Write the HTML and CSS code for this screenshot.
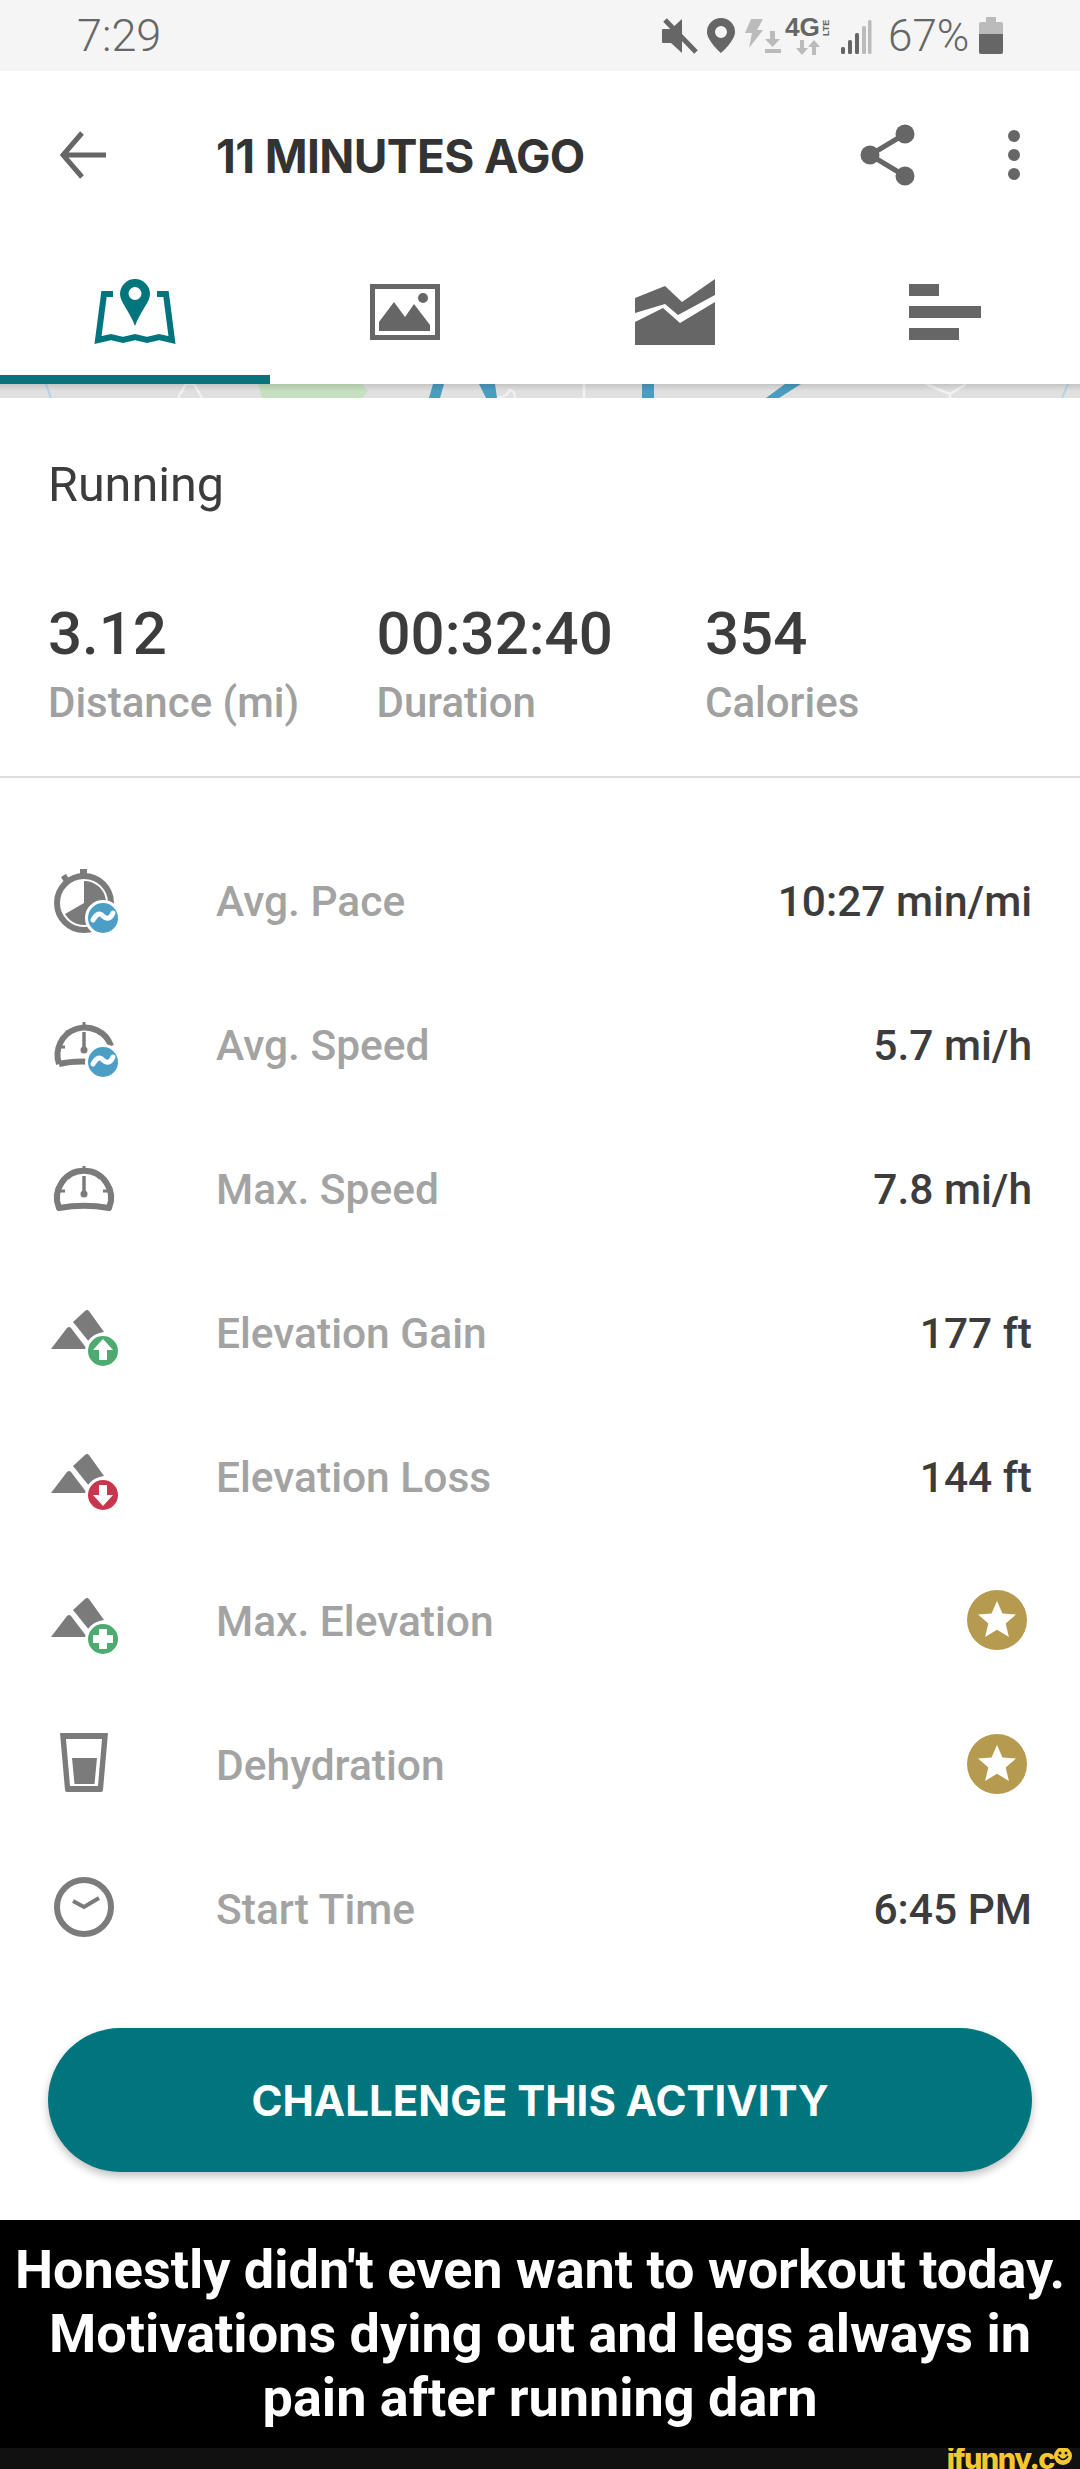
FILE: index.html
```html
<!DOCTYPE html>
<html lang="en">
<head>
<meta charset="utf-8">
<title>Activity</title>
<link rel="stylesheet" href="styles.css">
</head>
<body>
<div class="page">
  <header class="status">
    <span class="clock">7:29</span>
    <div class="status-right">
      <svg class="status-icons" width="210" height="71" viewBox="662 0 210 71">
        <path class="d" d="M663 29h8l11-10v34l-11-10h-8a1 1 0 0 1-1-1V30a1 1 0 0 1 1-1z"/>
        <path class="cut" d="M665 20l31 32" />
        <path class="d" fill-rule="evenodd" d="M721 18a14 14 0 0 1 14 14c0 9-14 21-14 21s-14-12-14-21a14 14 0 0 1 14-14zm0 8a6 6 0 1 0 0 12 6 6 0 0 0 0-12z"/>
        <path class="l" d="M751 19h12l-6 11h6l-14 18 3-15h-7z"/>
        <path class="l" d="M770 31h5v8h5l-7.500 8-7.500-8h5zM765 49h16v4h-16z"/>
        <text class="net" x="785" y="36" textLength="35" lengthAdjust="spacingAndGlyphs">4G</text>
        <text class="lte" transform="translate(829 36) rotate(-90)">LTE</text>
        <path class="l" d="M800 40h4v8h4l-6 7-6-7h4zM814 40l6 7h-4v8h-4v-8h-4z"/>
        <rect class="d" x="841" y="47" width="4" height="7" rx="1.500"/>
        <rect class="d" x="848" y="40" width="4" height="14" rx="1.500"/>
        <rect class="d" x="855" y="33" width="4" height="21" rx="1.500"/>
        <rect class="l" x="862" y="26" width="4" height="28" rx="1.500"/>
        <rect class="l" x="868" y="20" width="3.500" height="34" rx="1.500"/>
      </svg>
      <span class="pct">67%</span>
      <svg class="battery" width="24" height="37" viewBox="0 0 24 37">
        <path class="l" d="M7 0h10v5h5a2 2 0 0 1 2 2v10H0V7a2 2 0 0 1 2-2h5z"/>
        <path class="d" d="M0 17h24v18a2 2 0 0 1-2 2H2a2 2 0 0 1-2-2z"/>
      </svg>
    </div>
  </header>

  <div class="appbar">
    <svg class="back" width="48" height="48" viewBox="0 0 48 48"><path d="M46 24H3M22 2 3 24l19 22"/></svg>
    <h1 class="title">11 MINUTES AGO</h1>
    <svg class="share" width="60" height="64" viewBox="0 0 60 64">
      <path class="share-line" d="M45 11 10 32l35 21"/>
      <circle cx="45" cy="11" r="9.500"/><circle cx="10" cy="32" r="9.500"/><circle cx="45" cy="53" r="9.500"/>
    </svg>
    <svg class="more" width="12" height="50" viewBox="0 0 12 50">
      <circle cx="6" cy="6" r="6"/><circle cx="6" cy="25" r="6"/><circle cx="6" cy="44" r="6"/>
    </svg>
  </div>

  <nav class="tabs">
    <div class="tab tab-active">
      <svg width="90" height="72" viewBox="90 276 90 72">
        <path class="book" d="M113 294h-9l-6 46 13-3 12 3 12-3 12 3 12-3 13 3-6-46h-9"/>
        <path class="pin" fill-rule="evenodd" d="M135 279a15 15 0 0 1 15 15c0 8-9 16-15 32-6-16-15-24-15-32a15 15 0 0 1 15-15zm0 8a6.500 6.500 0 1 0 0 13 6.500 6.500 0 0 0 0-13z"/>
      </svg>
    </div>
    <div class="tab">
      <svg width="90" height="72" viewBox="360 276 90 72">
        <path class="g" fill-rule="evenodd" d="M370 284h70v56h-70zm5 5v46h60v-46z"/>
        <path class="g" d="M379 331v-9l15-20 11 15 9-13 16 21v6z"/>
        <circle class="g" cx="423" cy="298" r="5"/>
      </svg>
    </div>
    <div class="tab">
      <svg width="90" height="72" viewBox="630 276 90 72">
        <path class="g" d="M635 298l30-12 17 16 33-23v16l-37 20-13-11-30 9z"/>
        <path class="g" d="M635 322l28-14 17 15 35-21v43h-80z"/>
      </svg>
    </div>
    <div class="tab">
      <svg width="90" height="72" viewBox="900 276 90 72">
        <path class="g" d="M909 284h30v12h-30zM909 306h72v12h-72zM909 328h50v12h-50z"/>
      </svg>
    </div>
  </nav>

  <svg class="map" width="1080" height="14" viewBox="0 0 1080 14" preserveAspectRatio="none">
    <defs>
      <linearGradient id="mapshade" x1="0" y1="0" x2="0" y2="1">
        <stop offset="0" stop-color="#000" stop-opacity="0.12"/>
        <stop offset="0.5" stop-color="#000" stop-opacity="0"/>
      </linearGradient>
    </defs>
    <rect width="1080" height="14" fill="#e0e0e0"/>
    <path d="M258 0h104l6 7-6 7H262z" fill="#c5e0c0"/>
    <path d="M46 0l5 14M1068 0l-6 14" stroke="#b5d3e6" stroke-width="2" fill="none"/>
    <path d="M178 14l8-14h8l8 14M584 0v14M926 0l24 10v4M966 0l-16 10" stroke="#f2f2f2" stroke-width="2.500" fill="none"/>
    <path d="M433 0h11l-4 14h-11zM479 0h16l2 14h-11zM642 0h12v14h-12zM785 0h16l-22 14h-13z" fill="#4b9cbf"/>
    <path d="M497 14q12-2 12-8 6 0 6 8" stroke="#f2f2f2" stroke-width="2" fill="none"/>
    <rect width="1080" height="14" fill="url(#mapshade)"/>
  </svg>

  <section class="summary">
    <h2 class="sport">Running</h2>
    <div class="stats">
      <div class="stat"><div class="stat-num">3.12</div><div class="stat-label">Distance (mi)</div></div>
      <div class="stat"><div class="stat-num">00:32:40</div><div class="stat-label">Duration</div></div>
      <div class="stat"><div class="stat-num">354</div><div class="stat-label">Calories</div></div>
    </div>
  </section>

  <section class="rows">
    <div class="row">
      <svg class="row-icon" viewBox="0 0 80 80">
        <rect class="m" x="32" y="9" width="7" height="7"/>
        <path class="m" d="M13 17l5-3 3 5-5 3z"/>
        <circle class="ring" cx="36" cy="43" r="27"/>
        <path class="m" d="M36 21A22 22 0 1 1 17 54L36 43z"/>
        <circle class="bd-blue" cx="55" cy="58" r="16.500"/>
        <path class="wave" d="M45 60c4-7 7-7 10-4s7 4 10-3"/>
      </svg>
      <span class="row-label">Avg. Pace</span><span class="row-value">10:27 min/mi</span>
    </div>
    <div class="row">
      <svg class="row-icon" viewBox="0 0 80 80">
        <path class="gauge" d="M11 60A27 27 0 1 1 63 42M11 60c12-3 24-3 36-2"/>
        <path class="tick" d="M36 18v5M18 27l4 3M54 27l-4 3M12 43h5"/>
        <path class="needle" d="M36 28v16"/><circle class="m" cx="36" cy="46" r="3.500"/>
        <circle class="bd-blue" cx="55" cy="58" r="16.500"/>
        <path class="wave" d="M45 60c4-7 7-7 10-4s7 4 10-3"/>
      </svg>
      <span class="row-label">Avg. Speed</span><span class="row-value">5.7 mi/h</span>
    </div>
    <div class="row">
      <svg class="row-icon" viewBox="0 0 80 80">
        <path class="gauge" d="M11 60A27 27 0 1 1 61 60c-16-3-34-3-50 0z"/>
        <path class="tick" d="M36 18v5M18 27l4 3M54 27l-4 3M12 43h5M60 43h-5"/>
        <path class="needle" d="M36 28v16"/><circle class="m" cx="36" cy="46" r="3.500"/>
      </svg>
      <span class="row-label">Max. Speed</span><span class="row-value">7.8 mi/h</span>
    </div>
    <div class="row">
      <svg class="row-icon" viewBox="0 0 80 80">
        <path class="m" d="M3 57l16-21q2-2 4 0l16 21zM25 30l12-11q2-2 4 0l15 21q-9 1-14 11z"/>
        <circle class="bd-green" cx="55" cy="59" r="16.500"/>
        <path class="white" d="M55 47l10 11h-6v10h-8V58h-6z"/>
      </svg>
      <span class="row-label">Elevation Gain</span><span class="row-value">177 ft</span>
    </div>
    <div class="row">
      <svg class="row-icon" viewBox="0 0 80 80">
        <path class="m" d="M3 57l16-21q2-2 4 0l16 21zM25 30l12-11q2-2 4 0l15 21q-9 1-14 11z"/>
        <circle class="bd-red" cx="55" cy="59" r="16.500"/>
        <path class="white" d="M51 49h8v10h6L55 70 45 59h6z"/>
      </svg>
      <span class="row-label">Elevation Loss</span><span class="row-value">144 ft</span>
    </div>
    <div class="row">
      <svg class="row-icon" viewBox="0 0 80 80">
        <path class="m" d="M3 57l16-21q2-2 4 0l16 21zM25 30l12-11q2-2 4 0l15 21q-9 1-14 11z"/>
        <circle class="bd-green" cx="55" cy="59" r="16.500"/>
        <path class="white" d="M51 49h8v6h6v8h-6v6h-8v-6h-6v-8h6z"/>
      </svg>
      <span class="row-label">Max. Elevation</span>
      <svg class="star" width="60" height="60" viewBox="0 0 60 60"><circle class="star-bg" cx="30" cy="30" r="30"/><path class="white" d="M30 11l5.500 12.500 13.500 1-10.300 9 3.200 13.500L30 39.800 18.100 47l3.200-13.500-10.300-9 13.500-1z"/></svg>
    </div>
    <div class="row">
      <svg class="row-icon" viewBox="0 0 80 80">
        <path class="m" fill-rule="evenodd" d="M12 9h48l-5 57a2 2 0 0 1-2 2H19a2 2 0 0 1-2-2zm6 6 4 47h28l4-47z"/>
        <path class="m" d="M24 34h25l-2.500 26h-20z"/>
      </svg>
      <span class="row-label">Dehydration</span>
      <svg class="star" width="60" height="60" viewBox="0 0 60 60"><circle class="star-bg" cx="30" cy="30" r="30"/><path class="white" d="M30 11l5.500 12.500 13.500 1-10.300 9 3.200 13.500L30 39.800 18.100 47l3.200-13.500-10.300-9 13.500-1z"/></svg>
    </div>
    <div class="row">
      <svg class="row-icon" viewBox="0 0 80 80">
        <circle class="ring" cx="36" cy="39" r="27"/>
        <path class="hands" d="M25 33l11 6 15-9"/>
      </svg>
      <span class="row-label">Start Time</span><span class="row-value">6:45 PM</span>
    </div>
  </section>

  <div class="cta"><button class="cta-btn">CHALLENGE THIS ACTIVITY</button></div>

  <div class="caption">Honestly didn't even want to workout today.<br>Motivations dying out and legs always in<br>pain after running darn</div>
  <footer class="brand">
    <span class="brand-name">ifunny.c</span>
    <svg class="brand-face" width="18" height="18" viewBox="0 0 18 18"><circle class="face" cx="9" cy="9" r="9"/><path class="smile" d="M4 9q5 7 10 0"/><circle class="eye" cx="6" cy="6" r="1.500"/><circle class="eye" cx="12" cy="6" r="1.500"/></svg>
  </footer>
</div>
</body>
</html>
```

FILE: styles.css
```css
* { box-sizing: border-box; margin: 0; padding: 0; }
html, body { background: #fff; }
body { font-family: Roboto, "Liberation Sans", sans-serif; }
.page { width: 1080px; height: 2469px; overflow: hidden; display: flex; flex-direction: column; }

.status { height: 71px; background: #f5f5f5; display: flex; align-items: center; justify-content: space-between; padding: 0 77px; color: #666; }
.clock { font-size: 45px; font-weight: 300; }
.status-right { display: flex; align-items: center; }
.status-icons { display: block; }
.pct { font-size: 44px; font-weight: 300; margin-left: 16px; width: 91px; }
.battery { display: block; }
.d { fill: #666; }
.l { fill: #bbb; }
.cut { stroke: #666; stroke-width: 5; fill: none; }
.net { font-family: "Liberation Sans", sans-serif; font-size: 25px; font-weight: 700; fill: #666; }
.lte { font-family: "Liberation Sans", sans-serif; font-size: 9px; font-weight: 700; fill: #666; }

.appbar { height: 168px; display: flex; align-items: center; padding-left: 60px; }
.back { display: block; fill: none; stroke: #666; stroke-width: 5; }
.title { font-family: Inter, sans-serif; font-size: 46px; font-weight: 700; color: #333; letter-spacing: -0.6px; margin-left: 108px; flex: 1; padding-top: 2px; }
.share { display: block; fill: #666; margin-right: 88px; }
.share-line { fill: none; stroke: #666; stroke-width: 5; }
.more { display: block; fill: #666; margin-right: 60px; }

.tabs { height: 145px; display: flex; }
.tab { width: 270px; display: flex; justify-content: center; padding-top: 37px; }
.tab svg { display: block; }
.tab-active { border-bottom: 9px solid #07747d; }
.book { fill: none; stroke: #00757d; stroke-width: 6; }
.pin { fill: #00757d; }
.g { fill: #666; }

.map { display: block; flex: none; }

.summary { height: 380px; padding: 57px 48px 0; border-bottom: 2px solid #ddd; }
.sport { font-size: 48.500px; font-weight: 400; color: #3c3c3c; line-height: 60px; }
.stats { display: grid; grid-template-columns: repeat(3, 328.500px); margin-top: 83px; }
.stat-num { font-size: 60px; font-weight: 500; color: #3c3c3c; line-height: 72px; }
.stat-label { font-size: 42px; font-weight: 500; color: #a0a0a0; line-height: 50px; margin-top: 8px; }

.rows { padding: 50px 48px 0; }
.row { height: 144px; display: flex; align-items: center; }
.row-icon { width: 80px; height: 80px; flex: none; display: block; }
.row-label { font-size: 42.500px; font-weight: 500; color: #a3a3a3; margin-left: 88px; flex: 1; padding-top: 2px; }
.row-value { font-size: 42.500px; font-weight: 500; color: #3c3c3c; padding-top: 2px; }
.m { fill: #7b7b7b; }
.ring { fill: none; stroke: #7b7b7b; stroke-width: 6; }
.gauge { fill: none; stroke: #7b7b7b; stroke-width: 6; stroke-linejoin: round; }
.tick { fill: none; stroke: #7b7b7b; stroke-width: 3; }
.needle { fill: none; stroke: #7b7b7b; stroke-width: 3.500; }
.hands { fill: none; stroke: #7b7b7b; stroke-width: 4; }
.bd-blue { fill: #4b9fc7; stroke: #fff; stroke-width: 3; }
.bd-green { fill: #4dab72; stroke: #fff; stroke-width: 3; }
.bd-red { fill: #c9354f; stroke: #fff; stroke-width: 3; }
.wave { fill: none; stroke: #fff; stroke-width: 5; stroke-linecap: round; }
.white { fill: #fff; }
.star { display: block; margin-right: 5px; flex: none; }
.star-bg { fill: #b59a4f; }

.cta { padding: 48px 48px 0; height: 240px; }
.cta-btn { display: block; width: 984px; height: 144px; border: 0; border-radius: 72px; background: #00757d; color: #fff; font-family: Inter, sans-serif; font-size: 42px; font-weight: 700; letter-spacing: 0; box-shadow: 0 4px 8px rgba(0, 0, 0, 0.25); }

.caption { height: 228px; background: #000; color: #fff; font-family: Roboto, sans-serif; font-weight: 700; font-size: 54px; line-height: 64px; text-align: center; padding-top: 18px; white-space: nowrap; }
.brand { height: 21px; background: #111; display: flex; justify-content: flex-end; align-items: flex-start; padding-right: 8px; overflow: hidden; }
.brand-name { font-family: Inter, sans-serif; font-size: 29px; font-weight: 800; line-height: 21px; letter-spacing: -1.500px; color: #f5c832; }
.brand-face { display: block; flex: none; margin-top: -1px; }
.face { fill: #f5c832; }
.smile { fill: none; stroke: #111; stroke-width: 1.500; }
.eye { fill: #111; }
```
